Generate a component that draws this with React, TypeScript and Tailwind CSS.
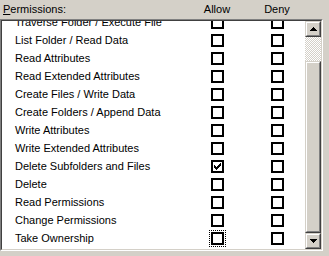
import React from "react";

const rows: { label: string; allow?: boolean; focus?: boolean }[] = [
  { label: "Traverse Folder / Execute File" },
  { label: "List Folder / Read Data" },
  { label: "Read Attributes" },
  { label: "Read Extended Attributes" },
  { label: "Create Files / Write Data" },
  { label: "Create Folders / Append Data" },
  { label: "Write Attributes" },
  { label: "Write Extended Attributes" },
  { label: "Delete Subfolders and Files", allow: true },
  { label: "Delete" },
  { label: "Read Permissions" },
  { label: "Change Permissions" },
  { label: "Take Ownership", focus: true },
];

function Check() {
  const px: [number, number, number][] = [
    [6, 0, 1],
    [5, 1, 2],
    [0, 2, 1],
    [4, 2, 3],
    [0, 3, 2],
    [3, 3, 3],
    [0, 4, 5],
    [1, 5, 3],
    [2, 6, 1],
  ];
  return (
    <svg width="7" height="7" viewBox="0 0 7 7" shapeRendering="crispEdges">
      {px.map(([x, y, w], i) => (
        <rect key={i} x={x} y={y} width={w} height={1} fill="#000" />
      ))}
    </svg>
  );
}

function Box({ checked, focus }: { checked?: boolean; focus?: boolean }) {
  return (
    <div
      className={
        "w-[13px] h-[13px] border-2 border-black bg-white flex items-center justify-center shrink-0 " +
        (focus ? "outline-1 outline-dotted outline-black outline-offset-[1px]" : "")
      }
    >
      {checked ? <Check /> : null}
    </div>
  );
}

function Arrow({ down }: { down?: boolean }) {
  const r: [number, number, number][] = down
    ? [
        [0, 0, 7],
        [1, 1, 5],
        [2, 2, 3],
        [3, 3, 1],
      ]
    : [
        [3, 0, 1],
        [2, 1, 3],
        [1, 2, 5],
        [0, 3, 7],
      ];
  return (
    <svg width="7" height="4" viewBox="0 0 7 4" shapeRendering="crispEdges">
      {r.map(([x, y, w], i) => (
        <rect key={i} x={x} y={y} width={w} height={1} fill="#000" />
      ))}
    </svg>
  );
}

function Raised({ children, className = "" }: { children?: React.ReactNode; className?: string }) {
  return (
    <div
      className={
        "border border-t-[#d4d0c8] border-l-[#d4d0c8] border-b-[#404040] border-r-[#404040] bg-[#d4d0c8] " +
        className
      }
    >
      <div className="w-full h-full border border-t-white border-l-white border-b-[#808080] border-r-[#808080] flex items-center justify-center">
        {children}
      </div>
    </div>
  );
}

export default function App() {
  return (
    <div className="w-[329px] h-[256px] bg-[#d4d0c8] text-black text-[11px] leading-none font-['Liberation_Sans',Arial,sans-serif] overflow-hidden">
      <div className="h-[19px] flex items-center pl-[3px] pr-[22px]">
        <span className="flex-1">
          <span className="underline underline-offset-[1px]">P</span>ermissions:
        </span>
        <span className="w-[60px] text-center">Allow</span>
        <span className="w-[60px] text-center">Deny</span>
      </div>
      <div className="w-[323px] h-[232px] border border-t-[#808080] border-l-[#808080] border-b-white border-r-white">
        <div className="w-full h-full border border-t-[#404040] border-l-[#404040] border-b-[#d4d0c8] border-r-[#d4d0c8] flex">
          <div className="flex-1 bg-white overflow-hidden">
            <div className="-mt-[8px]">
              {rows.map((r) => (
                <div key={r.label} className="h-[18px] flex items-center pl-[13px] pr-[21px]">
                  <span className="flex-1 whitespace-nowrap">{r.label}</span>
                  <Box checked={r.allow} focus={r.focus} />
                  <div className="ml-[47px]">
                    <Box />
                  </div>
                </div>
              ))}
            </div>
          </div>
          <div className="w-[16px] flex flex-col">
            <Raised className="h-[16px]">
              <Arrow />
            </Raised>
            <div className="flex-1 flex flex-col">
              <div className="h-[24px] bg-[conic-gradient(#d4d0c8_25%,#ffffff_0_50%,#d4d0c8_0_75%,#ffffff_0)] bg-[length:2px_2px]" />
              <Raised className="flex-1" />
            </div>
            <Raised className="h-[16px]">
              <Arrow down />
            </Raised>
          </div>
        </div>
      </div>
    </div>
  );
}
